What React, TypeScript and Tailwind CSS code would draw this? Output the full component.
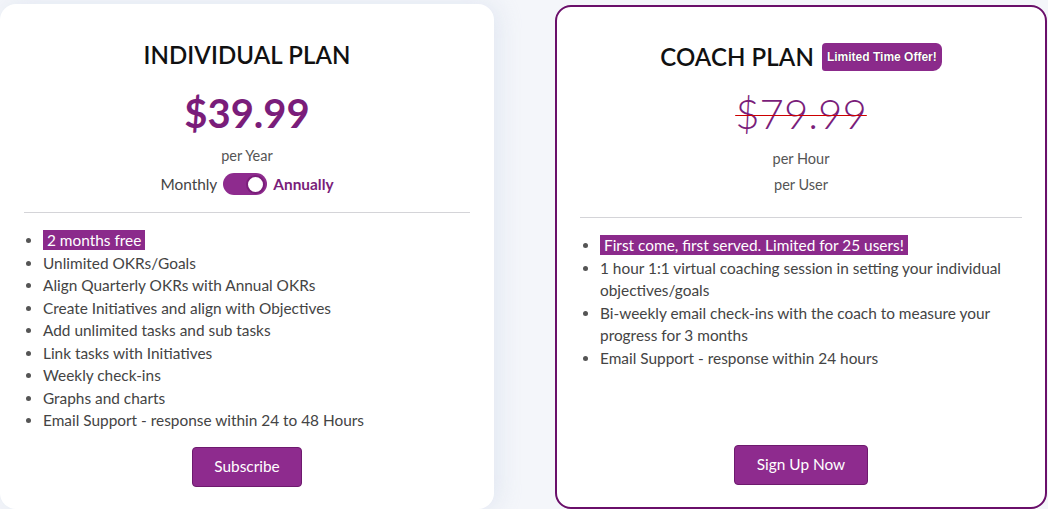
import { useState } from 'react'

const individualFeatures = [
  'Unlimited OKRs/Goals',
  'Align Quarterly OKRs with Annual OKRs',
  'Create Initiatives and align with Objectives',
  'Add unlimited tasks and sub tasks',
  'Link tasks with Initiatives',
  'Weekly check-ins',
  'Graphs and charts',
  'Email Support - response within 24 to 48 Hours',
]

const coachFeatures = [
  '1 hour 1:1 virtual coaching session in setting your individual objectives/goals',
  'Bi-weekly email check-ins with the coach to measure your progress for 3 months',
  'Email Support - response within 24 hours',
]

export default function App() {
  const [annual, setAnnual] = useState(true)

  return (
    <div className="w-[1048px] h-[509px] overflow-hidden bg-[#f4f6fa] flex items-start font-['Lato',sans-serif] text-[#444]">
      {/* Individual plan */}
      <div className="mt-[4px] w-[494px] h-[505px] bg-white rounded-2xl shadow-[4px_0_24px_rgba(200,210,230,0.45)] px-6 pt-[35px] flex flex-col">
        <h2 className="text-center text-[24px] leading-8 font-semibold text-[#111] tracking-[0.1px]">INDIVIDUAL PLAN</h2>
        <p className="mt-[18px] text-center text-[40px] leading-[48px] font-bold text-[#7a1d7a]">$39.99</p>
        <p className="mt-[9px] text-center text-[14.5px] leading-5 text-[#555]">per Year</p>
        <div className="mt-[6px] flex items-center justify-center gap-[6px] text-[15.4px] leading-6">
          <span className="text-[#444]">Monthly</span>
          <button
            onClick={() => setAnnual(!annual)}
            className={`w-[44px] h-[22px] rounded-full bg-[#8e2b8e] flex items-center px-[2px] ${annual ? 'justify-end' : 'justify-start'}`}
          >
            <span className="w-[19px] h-[19px] rounded-full bg-white border-2 border-[#7a1d7a]" />
          </button>
          <span className="font-bold text-[#7a1d7a]">Annually</span>
        </div>
        <div className="mt-[16px] border-t border-[#d4d4d8]" />
        <ul className="mt-[16px] list-disc pl-[19px] text-[15.4px] leading-[22.5px] marker:text-[#555]">
          <li>
            <span className="bg-[#8b2a8b] text-white px-[4px] py-[1px]">2 months free</span>
          </li>
          {individualFeatures.map((f) => (
            <li key={f}>{f}</li>
          ))}
        </ul>
        <div className="mt-[15px] flex justify-center">
          <button className="w-[110px] h-[40px] rounded-[4px] bg-[#8e2b8e] border border-[#6e1a6e] text-white text-[15.4px]">
            Subscribe
          </button>
        </div>
      </div>

      {/* Coach plan */}
      <div className="ml-[61px] mt-[5px] w-[492px] h-[504px] bg-white rounded-2xl border-2 border-[#6a0f6a] px-[23px] pt-[34px] pb-[22px] flex flex-col">
        <div className="flex items-center justify-center gap-[8px]">
          <h2 className="text-[24px] leading-8 font-semibold text-[#111] tracking-[0.1px]">COACH PLAN</h2>
          <span className="h-[28px] px-[5px] flex items-center bg-[#8b2a8b] text-white text-[12px] font-bold font-['Liberation_Sans',sans-serif] rounded-tl-[4px] rounded-tr-[6px] rounded-bl-[3px] rounded-br-[9px] [text-shadow:0_0_1px_rgba(0,0,0,0.6)]">
            Limited Time Offer!
          </span>
        </div>
        <p className="mt-[16px] text-center text-[42px] leading-[48px] font-light text-[#7a1d7a]">
          <span className="line-through decoration-[#c00] decoration-[1.2px]">$79.99</span>
        </p>
        <p className="mt-[9px] text-center text-[14.5px] leading-[26px] text-[#555]">per Hour</p>
        <p className="text-center text-[14.5px] leading-[26px] text-[#555]">per User</p>
        <div className="mt-[19px] border-t border-[#d4d4d8]" />
        <ul className="mt-[16px] list-disc pl-[20px] text-[15.4px] leading-[22.5px] marker:text-[#555]">
          <li>
            <span className="bg-[#8b2a8b] text-white px-[4px] py-[1px]">First come, first served. Limited for 25 users!</span>
          </li>
          {coachFeatures.map((f) => (
            <li key={f}>{f}</li>
          ))}
        </ul>
        <div className="mt-auto flex justify-center">
          <button className="w-[134px] h-[40px] rounded-[4px] bg-[#8e2b8e] border border-[#6e1a6e] text-white text-[15.4px]">
            Sign Up Now
          </button>
        </div>
      </div>
    </div>
  )
}
